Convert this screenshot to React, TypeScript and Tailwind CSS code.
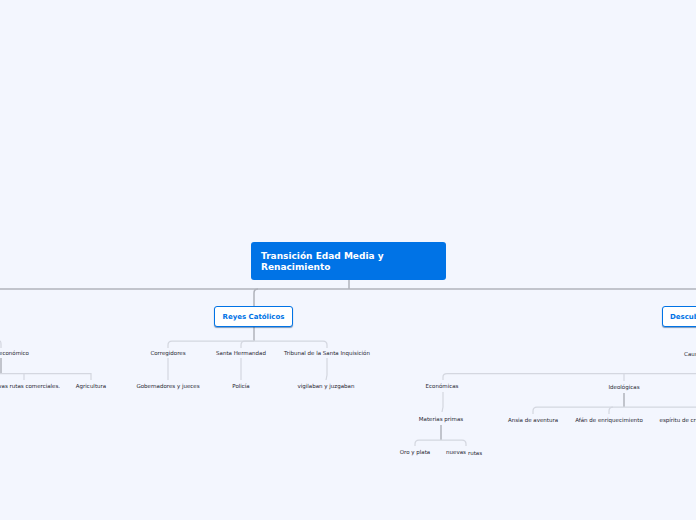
const labels = [
  { text: "económico", x: 14, y: 353 },
  { text: "nuevas rutas comerciales.", x: 24, y: 386 },
  { text: "Agricultura", x: 91, y: 386 },
  { text: "Corregidores", x: 168, y: 353 },
  { text: "Santa Hermandad", x: 241, y: 353 },
  { text: "Tribunal de la Santa Inquisición", x: 327, y: 353 },
  { text: "Gobernadores y jueces", x: 168, y: 386 },
  { text: "Policía", x: 241, y: 386 },
  { text: "vigilaban y juzgaban", x: 326, y: 386 },
  { text: "Causas", x: 694, y: 354 },
  { text: "Económicas", x: 442, y: 386 },
  { text: "Ideológicas", x: 624, y: 387 },
  { text: "Materias primas", x: 441, y: 419 },
  { text: "Ansia de aventura", x: 533, y: 420 },
  { text: "Afán de enriquecimiento", x: 609, y: 420 },
  { text: "espíritu de cruzada", x: 686, y: 420 },
  { text: "Oro y plata", x: 415, y: 452 },
  { text: "nuevas", x: 456, y: 452 },
  { text: "rutas", x: 475, y: 453 },
];

const thickLines = [
  "M0 289H696",
  "M349 280V289",
  "M254 306V293Q254 289 258 289",
  "M254 327V341",
  "M624 393V407",
  "M441 425V440",
  "M1 358V373",
];

const thinLines = [
  "M168 348V345Q168 341 172 341H323Q327 341 327 345V348",
  "M241 348V345Q241 341 245 341H254",
  "M168 358V380",
  "M241 358V380",
  "M327 358V375L326 380",
  "M0 341Q1 341 1 345V348",
  "M0 373.500H91V380",
  "M24 373.500V380",
  "M443 380V377Q443 373.500 447 373.500H696",
  "M624 373.500V381",
  "M443 392V407L442 412",
  "M415 446V444Q415 440 419 440H462Q466 440 466 444V446",
  "M533 414V411Q533 407 537 407H696",
  "M609 414V411Q609 407 613 407",
];

export default function App() {
  return (
    <div className="relative h-[520px] w-[696px] overflow-hidden bg-[#f3f6fe] font-['DejaVu_Sans',sans-serif]">
      <svg className="absolute left-0 top-0" width="696" height="520" fill="none">
        {thickLines.map((d) => (
          <path key={d} d={d} stroke="#b0b3bb" strokeWidth="1.500" />
        ))}
        {thinLines.map((d) => (
          <path key={d} d={d} stroke="#d4d7e0" strokeWidth="1.250" />
        ))}
      </svg>

      <div className="absolute left-[251px] top-[242px] flex h-[38px] w-[195px] items-center rounded-[3px] bg-[#0073e6] px-[10px] pt-[2px] text-[9px] font-bold leading-[11px] text-white">
        Transición Edad Media y Renacimiento
      </div>

      <div className="absolute left-[214px] top-[306px] flex h-[21px] w-[79px] items-center justify-center rounded-[3px] border border-[#0073e6] bg-white pt-[1px] text-[7px] font-bold whitespace-nowrap text-[#0073e6] shadow-[0_1px_1px_rgba(0,60,130,0.5)]">
        Reyes Católicos
      </div>
      <div className="absolute left-[662px] top-[306px] flex h-[21px] w-[100px] items-center rounded-[3px] border border-[#0073e6] bg-white pl-[7px] pt-[1px] text-[7px] font-bold whitespace-nowrap text-[#0073e6] shadow-[0_1px_1px_rgba(0,60,130,0.5)]">
        Descubrimientos
      </div>

      {labels.map((label) => (
        <span
          key={label.text}
          className="absolute -translate-x-1/2 -translate-y-1/2 text-[5.500px] leading-[8px] whitespace-nowrap text-[#1f2530]"
          style={{ left: label.x, top: label.y }}
        >
          {label.text}
        </span>
      ))}
    </div>
  );
}
